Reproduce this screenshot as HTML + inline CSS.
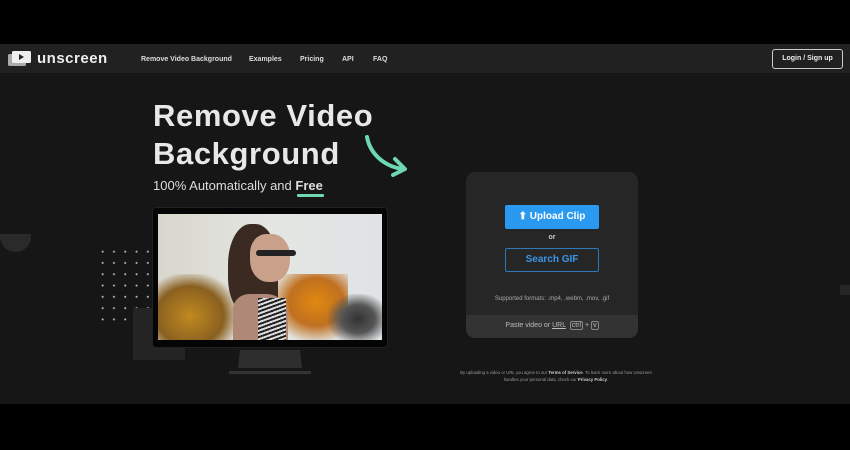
<!DOCTYPE html>
<html><head><meta charset="utf-8"><style>
*{margin:0;padding:0;box-sizing:border-box}
body{width:850px;height:450px;background:#000;font-family:"Liberation Sans",sans-serif;overflow:hidden;position:relative}
.main{position:absolute;left:0;top:44px;width:850px;height:360px;background:#161616}
.nav{position:absolute;left:0;top:44px;width:850px;height:29px;background:#212121}
.a{position:absolute;color:#ddd;font-size:7px;font-weight:bold;top:56px}
.dots{position:absolute;left:97px;top:246px;width:57px;height:80px;background-image:radial-gradient(circle,#bbb 0.8px,transparent 1.2px);background-size:11.3px 11.3px}
</style></head><body>
<div class="main"></div>
<div class="nav"></div>
<svg style="position:absolute;left:8px;top:50px" width="24" height="17"><rect x="0" y="4" width="18" height="12" rx="1.5" fill="#aaa"/><rect x="4" y="1" width="19" height="12" rx="1.5" fill="#eee"/><polygon points="11,4 11,10 16,7" fill="#222"/></svg>
<div style="position:absolute;left:37px;top:50px;color:#eee;font-size:15px;font-weight:bold;letter-spacing:0.5px">unscreen</div>
<div class="a" style="left:141px">Remove Video Background</div>
<div class="a" style="left:249px">Examples</div>
<div class="a" style="left:300px">Pricing</div>
<div class="a" style="left:342px">API</div>
<div class="a" style="left:373px">FAQ</div>
<div style="position:absolute;left:772px;top:49px;width:71px;height:20px;border:1px solid #ccc;border-radius:3px;color:#eee;font-size:7px;font-weight:bold;text-align:center;line-height:18px">Login / Sign up</div>
<div style="position:absolute;left:153px;top:97px;color:#e8e8e8;font-size:31px;font-weight:bold;line-height:38px;letter-spacing:0.6px">Remove Video<br>Background</div>
<div style="position:absolute;left:153px;top:178px;color:#ddd;font-size:13px">100% Automatically and <b>Free</b></div>
<div style="position:absolute;left:297px;top:194px;width:27px;height:3px;background:#6ed8b0;border-radius:1px"></div>
<svg style="position:absolute;left:360px;top:134px" width="52" height="44"><path d="M7 3 C10 20 25 33 43 35" stroke="#6ed8b0" stroke-width="4" fill="none" stroke-linecap="round"/><path d="M35 25 L45 35 L33 41" stroke="#6ed8b0" stroke-width="4" fill="none" stroke-linecap="round" stroke-linejoin="round"/></svg>
<div style="position:absolute;left:0;top:234px;width:31px;height:18px;background:#2a2a2a;border-radius:0 0 16px 16px"></div>
<div class="dots"></div>
<div style="position:absolute;left:133px;top:308px;width:52px;height:52px;background:#242424"></div>
<div style="position:absolute;left:153px;top:208px;width:234px;height:139px;background:#050505;border-radius:3px;box-shadow:0 0 0 1px #222"></div>
<div style="position:absolute;left:158px;top:214px;width:224px;height:126px;overflow:hidden;background:linear-gradient(90deg,#d8d6cc,#e4e6e2 50%,#dfe3e6)">
 <div style="position:absolute;left:0;top:60px;width:80px;height:70px;background:radial-gradient(ellipse at 40% 60%,#c08a20,#8a6020 50%,transparent 75%)"></div>
 <div style="position:absolute;left:110px;top:60px;width:80px;height:70px;background:radial-gradient(ellipse at 60% 40%,#e08810,#c07020 40%,transparent 70%)"></div>
 <div style="position:absolute;left:170px;top:80px;width:60px;height:50px;background:radial-gradient(ellipse,#333 0%,#555 40%,transparent 75%)"></div>
 <div style="position:absolute;left:70px;top:10px;width:50px;height:90px;background:#3a2a22;border-radius:45% 45% 20% 40%"></div>
 <div style="position:absolute;left:92px;top:20px;width:40px;height:48px;background:#c9a08a;border-radius:40% 45% 45% 45%"></div>
 <div style="position:absolute;left:98px;top:36px;width:40px;height:6px;background:#222;border-radius:3px"></div>
 <div style="position:absolute;left:75px;top:80px;width:55px;height:50px;background:#b08878;border-radius:30% 40% 0 0"></div>
 <div style="position:absolute;left:100px;top:84px;width:28px;height:45px;background:repeating-linear-gradient(160deg,#222 0 2px,#ddd 2px 4px)"></div>
</div>
<div style="position:absolute;left:238px;top:350px;width:64px;height:18px;background:#2e2e2e;clip-path:polygon(3% 0,97% 0,100% 100%,0 100%)"></div>
<div style="position:absolute;left:229px;top:371px;width:82px;height:3px;background:#333"></div>
<div style="position:absolute;left:466px;top:172px;width:172px;height:166px;background:#262626;border-radius:9px;overflow:hidden">
 <div style="position:absolute;left:39px;top:33px;width:94px;height:24px;background:#2a9af0;border-radius:2px;color:#fff;font-size:10px;font-weight:bold;text-align:center;line-height:24px">⬆ Upload Clip</div>
 <div style="position:absolute;left:0;width:172px;top:62px;text-align:center;color:#ccc;font-size:7px;font-weight:bold">or</div>
 <div style="position:absolute;left:39px;top:76px;width:94px;height:24px;border:1px solid #2f78b8;border-radius:2px;color:#3a96e6;font-size:10px;font-weight:bold;text-align:center;line-height:22px">Search GIF</div>
 <div style="position:absolute;left:0;width:172px;top:124px;text-align:center;color:#aaa;font-size:6px">Supported formats: .mp4, .webm, .mov, .gif</div>
 <div style="position:absolute;left:0;top:143px;width:172px;height:23px;background:#333;color:#bbb;font-size:7px;text-align:center;line-height:21px">Paste video or <u>URL</u> &nbsp;<span style="border:1px solid #888;border-radius:2px;padding:0 1px">ctrl</span> + <span style="border:1px solid #888;border-radius:2px;padding:0 1px">v</span></div>
</div>
<div style="position:absolute;left:456px;top:369px;width:200px;text-align:center;color:#999;font-size:4.3px;line-height:7px">By uploading a video or URL you agree to our <b style="color:#ccc">Terms of Service</b>. To learn more about how Unscreen handles your personal data, check our <b style="color:#ccc">Privacy Policy</b>.</div>
<div style="position:absolute;left:840px;top:285px;width:10px;height:10px;background:#262626"></div>
</body></html>
